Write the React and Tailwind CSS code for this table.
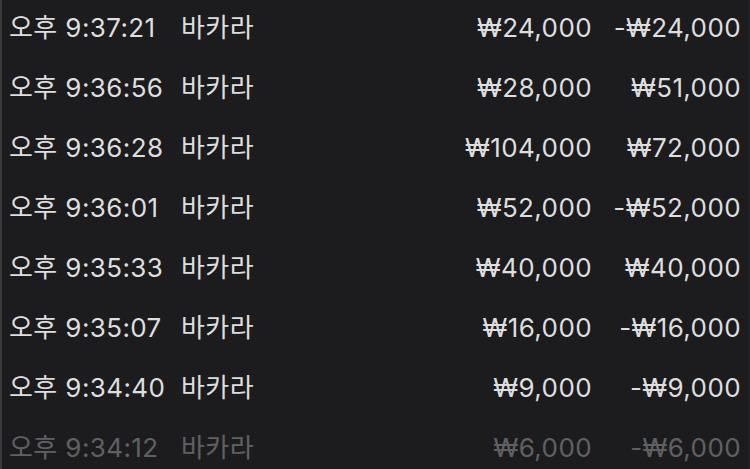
const rows = [
  { time: "오후 9:37:21", game: "바카라", bet: "₩24,000", net: "-₩24,000" },
  { time: "오후 9:36:56", game: "바카라", bet: "₩28,000", net: "₩51,000" },
  { time: "오후 9:36:28", game: "바카라", bet: "₩104,000", net: "₩72,000" },
  { time: "오후 9:36:01", game: "바카라", bet: "₩52,000", net: "-₩52,000" },
  { time: "오후 9:35:33", game: "바카라", bet: "₩40,000", net: "₩40,000" },
  { time: "오후 9:35:07", game: "바카라", bet: "₩16,000", net: "-₩16,000" },
  { time: "오후 9:34:40", game: "바카라", bet: "₩9,000", net: "-₩9,000" },
  { time: "오후 9:34:12", game: "바카라", bet: "₩6,000", net: "-₩6,000" },
];

function HistoryRow({ row, faded }) {
  return (
    <div
      className={`flex items-center h-[60px] text-[26px] tracking-[0.4px] text-[#dedede] ${
        faded ? "opacity-35" : ""
      }`}
    >
      <span className="w-[172px] whitespace-nowrap">{row.time}</span>
      <span className="whitespace-nowrap">{row.game}</span>
      <span className="flex-1 text-right whitespace-nowrap">{row.bet}</span>
      <span className="w-[149px] text-right whitespace-nowrap">{row.net}</span>
    </div>
  );
}

export default function App() {
  return (
    <main
      className="w-[750px] h-[469px] bg-[#1c1c1e] overflow-hidden flex"
      style={{ fontFamily: 'Inter, "Noto Sans CJK KR", sans-serif' }}
    >
      {/* left edge strip */}
      <div className="w-[2px] bg-[#3a3a3c]" />

      <div className="flex-1 pl-[7px] pr-[7px] -mt-[3px]">
        {rows.map((row, i) => (
          <HistoryRow key={i} row={row} faded={i === rows.length - 1} />
        ))}
      </div>

      <div className="w-[2px] bg-[#232325]" />
    </main>
  );
}
